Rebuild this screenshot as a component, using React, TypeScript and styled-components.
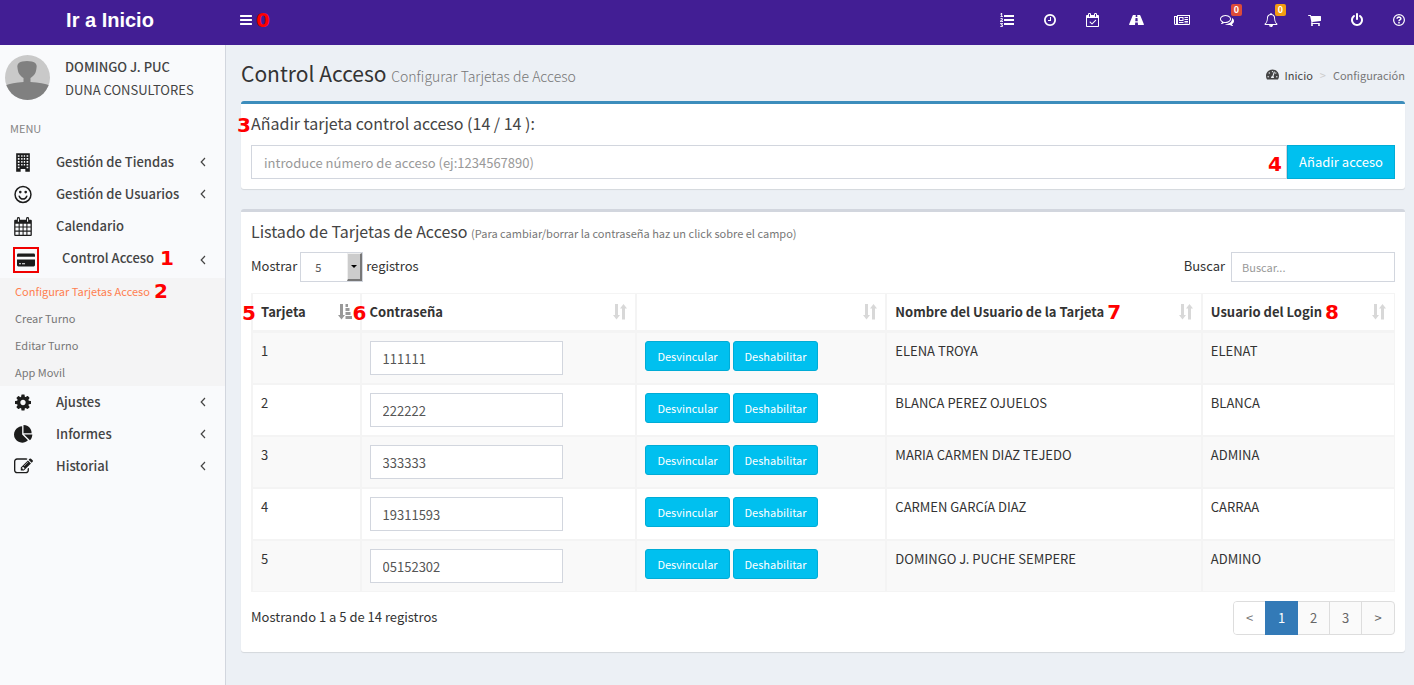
import React from 'react';
import styled, { createGlobalStyle, css } from 'styled-components';
import { FaTachometerAlt } from 'react-icons/fa';

const Global = createGlobalStyle`
  *, *::before, *::after { box-sizing: border-box; }
  body {
    margin: 0;
    background: #ecf0f5;
    color: #333;
    font-family: "Noto Sans CJK SC", "Noto Sans", sans-serif;
    font-size: 13px;
    line-height: 20px;
  }
  a { color: inherit; text-decoration: none; }
  button, input, select { font: inherit; color: inherit; margin: 0; }
  h1, h2, p, ul, ol { margin: 0; padding: 0; font-weight: 400; }
  ul, ol { list-style: none; }
`;

/* ---------- icons ---------- */

type Glyph = { x: number; w: number; body: React.ReactNode };
const solid = (x: number, w: number, d: string): Glyph => ({ x, w, body: <path d={d} fillRule="evenodd" /> });

const glyphs: Record<string, Glyph> = {
  bars: solid(128, 1536, 'M1664 1344v128q0 26-19 45t-45 19H192q-26 0-45-19t-19-45v-128q0-26 19-45t45-19h1408q26 0 45 19t19 45zm0-512v128q0 26-19 45t-45 19H192q-26 0-45-19t-19-45V832q0-26 19-45t45-19h1408q26 0 45 19t19 45zm0-512v128q0 26-19 45t-45 19H192q-26 0-45-19t-19-45V320q0-26 19-45t45-19h1408q26 0 45 19t19 45z'),
  list: solid(0, 1792, 'M381 1620q0 80-54.5 126t-135.5 46q-106 0-172-66l57-88q49 45 106 45 29 0 50.5-14.5t21.5-42.5q0-64-105-56l-26-56q8-10 32.5-43.5t42.5-54 37-38.5v-1q-16 0-48.5 1t-48.5 1v53h-106v-152h333v88l-95 115q51 12 81 49t30 88zm2-627v159h-362q-6-36-6-54 0-51 23.5-93t56.5-68 66-47.5 56.5-43.5 23.5-45q0-25-14.5-38.5t-39.5-13.5q-46 0-81 58l-85-59q24-51 71.5-79.5t105.5-28.5q73 0 123 41.5t50 112.5q0 50-34 91.5t-75 64.5-75.5 50.5-35.5 52.5h127v-60h105zm1409 319v192q0 13-9.5 22.5t-22.5 9.5h-1216q-13 0-22.5-9.5t-9.5-22.5v-192q0-14 9-23t23-9h1216q13 0 22.5 9.5t9.5 22.5zm-1408-899v99h-335v-99h107q0-41 .5-121.5t.5-121.5v-12h-2q-8 17-50 54l-71-76 136-127h106v404h108zm1408 387v192q0 13-9.5 22.5t-22.5 9.5h-1216q-13 0-22.5-9.5t-9.5-22.5v-192q0-14 9-23t23-9h1216q13 0 22.5 9.5t9.5 22.5zm0-512v192q0 13-9.5 22.5t-22.5 9.5h-1216q-13 0-22.5-9.5t-9.5-22.5v-192q0-13 9.5-22.5t22.5-9.5h1216q13 0 22.5 9.5t9.5 22.5z'),
  clock: solid(128, 1536, 'M1024 544v448q0 14-9 23t-23 9H672q-14 0-23-9t-9-23v-64q0-14 9-23t23-9h224V544q0-14 9-23t23-9h64q14 0 23 9t9 23zm416 352q0-148-73-273t-198-198-273-73-273 73-198 198-73 273 73 273 198 198 273 73 273-73 198-198 73-273zm224 0q0 209-103 385.5T1281.5 1561 896 1664t-385.5-103T231 1281.5 128 896t103-385.5T510.5 231 896 128t385.5 103T1561 510.5 1664 896z'),
  calendarCheck: solid(0, 1664, 'M1303 964l-512 512q-10 9-23 9t-23-9l-288-288q-9-10-9-23t9-22l46-46q9-9 22-9t23 9l220 220 444-444q10-9 23-9t22 9l46 46q9 9 9 22t-9 23zm-1175 700h1408v-1024h-1408v1024zm384-1216v-288q0-14-9-23t-23-9h-64q-14 0-23 9t-9 23v288q0 14 9 23t23 9h64q14 0 23-9t9-23zm768 0v-288q0-14-9-23t-23-9h-64q-14 0-23 9t-9 23v288q0 14 9 23t23 9h64q14 0 23-9t9-23zm384-64v1280q0 52-38 90t-90 38h-1408q-52 0-90-38t-38-90v-1280q0-52 38-90t90-38h128v-96q0-66 47-113t113-47h64q66 0 113 47t47 113v96h384v-96q0-66 47-113t113-47h64q66 0 113 47t47 113v96h128q52 0 90 38t38 90z'),
  road: solid(0, 1920, 'M540 256H870L850 512H1070L1050 256H1380Q1430 256 1450 306L1866 1336Q1904 1430 1904 1490 1904 1536 1870 1536H1150L1124 1216H796L770 1536H50Q16 1536 16 1490 16 1430 54 1336L470 306Q490 256 540 256ZM834 640L802 1056H1118L1086 640Z'),
  newspaper: {
    x: 0, w: 2048, body: (
      <path fillRule="evenodd" d="M384 256H2048V1408Q2048 1536 1920 1536H192Q0 1536 0 1344V384H384ZM512 384V1344Q512 1380 502 1408H1920V384ZM256 512H128V1344Q128 1408 192 1408T256 1344ZM640 512H1216V1024H640ZM768 640V896H1088V640ZM640 1152H1216V1280H640ZM1344 512H1792V640H1344ZM1344 768H1792V896H1344ZM1344 1024H1792V1152H1344ZM1344 1216H1792V1300H1344Z" />
    ),
  },
  comments: solid(0, 1792, 'M704 384q-153 0-286 52t-211.5 141-78.5 191q0 82 53 158t149 132l97 56-35 84q34-20 62-39l44-31 53 10q78 14 153 14 153 0 286-52t211.5-141 78.5-191-78.5-191-211.5-141-286-52zm0-128q191 0 353.5 68.5t256.5 186.5 94 257-94 257-256.5 186.5-353.5 68.5q-86 0-176-16-124 88-278 128-36 9-86 16h-3q-11 0-20.5-8t-11.5-21q-1-3-1-6.5t.5-6.5 2-6l2.5-5 3.5-5.5 4-5 4.5-5 4-4.5q5-6 23-25t26-29.5 22.5-29 25-38.5 20.5-44q-124-72-195-177t-71-224q0-139 94-257t256.5-186.5 353.5-68.5zm822 1169q10 24 20.5 44t25 38.5 22.5 29 26 29.5 23 25q1 1 4 4.5t4.5 5 4 5 3.5 5.5l2.5 5 2 6 .5 6.5-1 6.5q-3 14-13 22t-22 7q-50-7-86-16-154-40-278-128-90 16-176 16-271 0-472-132 58 4 88 4 161 0 309-45t264-129q125-92 192-212t67-254q0-77-23-152 129 71 204 178t75 230q0 120-71 224.5t-195 176.5z'),
  bell: solid(0, 1792, 'M912 1696q0-16-16-16-59 0-101.5-42.5t-42.5-101.5q0-16-16-16t-16 16q0 73 51.5 124.5t124.5 51.5q16 0 16-16zm-666-288h1300q-266-300-266-832 0-51-24-105t-69-103-121.5-80.5-169.5-31.5-169.5 31.5-121.5 80.5-69 103-24 105q0 532-266 832zm1482 0q0 52-38 90t-90 38h-448q0 106-75 181t-181 75-181-75-75-181h-448q-52 0-90-38t-38-90q50-42 91-88t85-119.5 74.5-158.5 50-206 19.5-260q0-152 117-282.5t307-158.5q-8-19-8-39 0-40 28-68t68-28 68 28 28 68q0 20-8 39 190 28 307 158.5t117 282.5q0 139 19.5 260t50 206 74.5 158.5 85 119.5 91 88z'),
  cart: solid(64, 1664, 'M704 1536q0 52-38 90t-90 38-90-38-38-90 38-90 90-38 90 38 38 90zm896 0q0 52-38 90t-90 38-90-38-38-90 38-90 90-38 90 38 38 90zm128-1088v512q0 24-16.5 42.5t-40.5 21.5l-1044 122q13 60 13 70 0 16-24 64h920q26 0 45 19t19 45-19 45-45 19h-1024q-26 0-45-19t-19-45q0-11 8-31.5t16-36 21.5-40 15.5-29.5l-177-823h-204q-26 0-45-19t-19-45 19-45 45-19h256q16 0 28.5 6.5t19.5 15.5 13 24.5 8 26 5.5 29.5 4.5 26h1201q26 0 45 19t19 45z'),
  power: solid(128, 1536, 'M1664 896q0 156-61 298t-164 245-245 164-298 61-298-61-245-164-164-245-61-298q0-182 80.5-343t226.5-270q43-32 95.5-25t83.5 50q32 42 24.5 94.5t-49.5 84.5q-98 74-151.5 181t-53.5 228q0 104 40.5 198.5t109.5 163.5 163.5 109.5 198.5 40.5 198.5-40.5 163.5-109.5 109.5-163.5 40.5-198.5q0-121-53.5-228t-151.5-181q-42-32-49.5-84.5t24.5-94.5q31-43 84-50t95 25q146 109 226.5 270t80.5 343zm-640-768v640q0 52-38 90t-90 38-90-38-38-90v-640q0-52 38-90t90-38 90 38 38 90z'),
  question: {
    x: 128, w: 1536, body: (
      <>
        <circle cx="896" cy="896" r="690" fill="none" stroke="currentColor" strokeWidth="156" />
        <path d="M650 730Q660 500 900 500 1140 510 1140 715 1140 820 1010 890 896 950 896 1070" fill="none" stroke="currentColor" strokeWidth="190" />
        <path d="M800 1160h192v192H800z" />
      </>
    ),
  },
  building: solid(128, 1536, 'M240 0H1552V1792H1120V1520H672V1792H240ZM400 190V350H560V190ZM720 190V350H850V190ZM970 190V350H1100V190ZM1240 190V350H1400V190ZM400 470V630H560V470ZM720 470V630H850V470ZM970 470V630H1100V470ZM1240 470V630H1400V470ZM400 750V910H560V750ZM720 750V910H850V750ZM970 750V910H1100V750ZM1240 750V910H1400V750ZM400 1030V1190H560V1030ZM720 1030V1190H850V1030ZM970 1030V1190H1100V1030ZM1240 1030V1190H1400V1030ZM400 1310V1440H560V1310ZM1240 1310V1440H1400V1310Z'),
  smile: {
    x: 64, w: 1664, body: (
      <>
        <circle cx="896" cy="896" r="750" fill="none" stroke="currentColor" strokeWidth="140" />
        <circle cx="640" cy="670" r="125" />
        <circle cx="1152" cy="670" r="125" />
        <path d="M540 1060Q640 1330 896 1330T1252 1060" fill="none" stroke="currentColor" strokeWidth="140" strokeLinecap="round" />
      </>
    ),
  },
  calendar: solid(0, 1664, 'M90 256H256V130Q256 0 400 0T544 130V256H1120V130Q1120 0 1264 0T1408 130V256H1574Q1664 256 1664 350V1700Q1664 1792 1574 1792H90Q0 1792 0 1700V350Q0 256 90 256ZM350 130V450H450V130ZM1214 130V450H1314V130ZM120 640V900H420V640ZM520 640V900H790V640ZM890 640V900H1150V640ZM1250 640V900H1544V640ZM120 1000V1280H420V1000ZM520 1000V1280H790V1000ZM890 1000V1280H1150V1000ZM1250 1000V1280H1544V1000ZM120 1380V1670H420V1380ZM520 1380V1670H790V1380ZM890 1380V1670H1150V1380ZM1250 1380V1670H1544V1380Z'),
  card: solid(0, 1792, 'M130 256H1662Q1792 256 1792 386V570H0V386Q0 256 130 256ZM0 850H1792V1406Q1792 1536 1662 1536H130Q0 1536 0 1406ZM200 1210V1330H400V1210ZM500 1210V1330H800V1210Z'),
  cog: solid(128, 1536, 'M1152 896q0-106-75-181t-181-75-181 75-75 181 75 181 181 75 181-75 75-181zm512-109v222q0 12-8 23t-20 13l-185 28q-19 54-39 91 35 50 107 138 10 12 10 25t-9 23q-27 37-99 108t-94 71q-12 0-26-9l-138-108q-44 23-91 38-16 136-29 186-7 28-36 28h-222q-14 0-24.5-8.5t-11.5-21.5l-28-184q-49-16-90-37l-141 107q-10 9-25 9-14 0-25-11-126-114-165-168-7-10-7-23 0-12 8-23 15-21 51-66.5t54-70.5q-27-50-41-99l-183-27q-13-2-21-12.5t-8-23.5v-222q0-12 8-23t19-13l186-28q14-46 39-92-40-57-107-138-10-12-10-24 0-10 9-23 26-36 98.5-107.5t94.5-71.5q13 0 26 10l138 107q44-23 91-38 16-136 29-186 7-28 36-28h222q14 0 24.5 8.5t11.5 21.5l28 184q49 16 90 37l142-107q9-9 24-9 13 0 25 10 129 119 165 170 7 8 7 22 0 12-8 23-15 21-51 66.5t-54 70.5q26 50 41 98l183 28q13 2 21 12.5t8 23.5z'),
  pie: solid(0, 1792, 'M768 890l546 546q-106 108-247.5 168t-298.5 60q-209 0-385.5-103t-279.5-279.5-103-385.5 103-385.5 279.5-279.5 385.5-103v762zm187 6h773q0 157-60 298.5t-168 247.5zm709-128h-768v-768q209 0 385.5 103t279.5 279.5 103 385.5z'),
  edit: solid(0, 1792, 'M888 1184l116-116-152-152-116 116v56h96v96h56zm440-720q-16-16-33 1l-350 350q-17 17-1 33t33-1l350-350q17-17 1-33zm80 594v190q0 119-84.5 203.5t-203.5 84.5h-832q-119 0-203.5-84.5t-84.5-203.5v-832q0-119 84.5-203.5t203.5-84.5h832q63 0 117 25 15 7 18 23 3 17-9 29l-49 49q-14 14-32 8-23-6-45-6h-832q-66 0-113 47t-47 113v832q0 66 47 113t113 47h832q66 0 113-47t47-113v-126q0-13 9-22l64-64q15-15 35-7t20 29zm-96-738l288 288-672 672h-288v-288zm444 132l-92 92-288-288 92-92q28-28 68-28t68 28l152 152q28 28 28 68t-28 68z'),
};

const Svg = styled.svg`
  display: block;
  flex: none;
  fill: currentColor;
`;

const Icon = ({ name, size = 14 }: { name: string; size?: number }) => {
  const g = glyphs[name];
  return (
    <Svg aria-hidden viewBox={`${g.x} 0 ${g.w} 1792`} width={Math.round((g.w / 1792) * size)} height={size}>
      {g.body}
    </Svg>
  );
};

const Angle = () => (
  <Svg aria-hidden viewBox="0 0 6 10" width="6" height="10">
    <path d="M5 1L1.200 5 5 9" fill="none" stroke="currentColor" strokeWidth="1.200" />
  </Svg>
);

const SortBoth = () => (
  <Svg aria-hidden viewBox="0 0 14 16" width="14" height="16">
    <path d="M2 0h3v11h2L3.500 15.500 0 11h2zM9 15.500h3V4.500h2L10.500 0 7 4.500h2z" />
  </Svg>
);

const SortAsc = () => (
  <Svg aria-hidden viewBox="0 0 14 16" width="14" height="16">
    <path d="M2 0h3v11h2L3.500 15.500 0 11h2zM7.500 0h2.500v3H7.500zM7.500 4h4v3h-4zM7.500 8h5v3h-5zM7.500 12H14v3H7.500z" />
  </Svg>
);

/* ---------- numbered callouts ---------- */

const Marker = styled.span<{ $over?: string }>`
  color: #f00;
  font: 700 20px/20px "DejaVu Sans", sans-serif;
  ${(p) => p.$over && css`position: absolute; z-index: 1; ${p.$over}`}
`;

/* ---------- header ---------- */

const Header = styled.header`
  display: flex;
  align-items: center;
  height: 45px;
  padding-right: 9px;
  background: #421e94;
  color: #fff;
`;

const Brand = styled.a`
  flex: none;
  width: 220px;
  padding-bottom: 6px;
  text-align: center;
  font: 700 20px/24px "Liberation Sans", Arial, sans-serif;
`;

const IconButton = styled.button`
  display: flex;
  position: relative;
  padding: 0;
  border: 0;
  background: none;
  color: inherit;
  cursor: pointer;
`;

const HeaderLeft = styled.div`
  display: flex;
  align-items: center;
  gap: 4px;
  flex: 1;
  padding: 0 0 5px 20px;
`;

const HeaderNav = styled.nav`
  display: flex;
  align-items: center;
  gap: 30px;
  padding-bottom: 5px;
`;

const Count = styled.span<{ $color: string }>`
  position: absolute;
  top: -9px;
  right: -8px;
  width: 11px;
  border-radius: 2px;
  background: ${(p) => p.$color};
  text-align: center;
  font-size: 9px;
  line-height: 12px;
  font-weight: 700;
`;

/* ---------- sidebar ---------- */

const Body = styled.div`
  display: flex;
  align-items: stretch;
  min-height: calc(100vh - 45px);
`;

const Sidebar = styled.aside`
  flex: none;
  width: 226px;
  border-right: 1px solid #d2d6de;
  background: #f9fafc;
  color: #444;
`;

const User = styled.div`
  display: flex;
  gap: 15px;
  padding: 10px 5px;
`;

const UserText = styled.div`
  display: flex;
  flex-direction: column;
  gap: 3px;
  padding-top: 2px;
`;

const UserName = styled.strong`
  font-weight: 500;
`;

const MenuTitle = styled.p`
  padding: 8px 10px;
  color: #848484;
  font-size: 11px;
`;

const MenuLink = styled.a<{ $tall?: boolean }>`
  display: flex;
  align-items: center;
  height: ${(p) => (p.$tall ? 36 : 32)}px;
  padding: 0 19px 0 13px;
  font-weight: 500;
`;

const MenuIcon = styled.span<{ $framed?: boolean }>`
  display: flex;
  align-items: center;
  justify-content: center;
  flex: none;
  width: ${(p) => (p.$framed ? 26 : 20)}px;
  height: ${(p) => (p.$framed ? 26 : 20)}px;
  margin-right: 23px;
  border: ${(p) => (p.$framed ? '2px solid #f00000' : '0')};
  color: #1c1c1c;
`;

const MenuLabel = styled.span<{ $raised?: boolean }>`
  display: flex;
  align-items: center;
  gap: 6px;
  flex: 1;
  padding-bottom: ${(p) => (p.$raised ? 4 : 0)}px;
`;

const SubMenu = styled.ul`
  background: #f4f4f5;
  color: #777;
  font-size: 11px;
`;

const SubLink = styled.a<{ $active?: boolean }>`
  display: flex;
  align-items: center;
  gap: 4px;
  height: 27px;
  padding: 0 0 2px 15px;
  color: ${(p) => (p.$active ? '#ff7f50' : 'inherit')};
`;

/* ---------- content ---------- */

const Main = styled.main`
  flex: 1;
  min-width: 0;
  padding: 15px 9px 13px 15px;
`;

const PageHead = styled.div`
  display: flex;
  align-items: center;
  justify-content: space-between;
  height: 28px;
  margin-bottom: 13px;
`;

const PageTitle = styled.h1`
  font-size: 21px;
  line-height: 28px;
`;

const PageHint = styled.small`
  color: #777;
  font-size: 14px;
  font-weight: 300;
`;

const Crumbs = styled.ol`
  display: flex;
  align-items: center;
  gap: 7px;
  padding-top: 1px;
  color: #777;
  font-size: 11px;
`;

const CrumbLink = styled.a`
  display: flex;
  align-items: center;
  gap: 6px;
  color: #444;
`;

const CrumbSep = styled.li`
  color: #ccc;
`;

const Box = styled.section<{ $accent: string }>`
  position: relative;
  margin-bottom: 20px;
  padding: 10px;
  border-top: 3px solid ${(p) => p.$accent};
  border-radius: 3px;
  background: #fff;
  box-shadow: 0 1px 1px rgba(0, 0, 0, 0.1);
`;

const BoxTitle = styled.h2`
  margin-bottom: 12px;
  color: #444;
  font-size: 16px;
  line-height: 18px;
`;

const BoxHint = styled.small`
  color: #777;
  font-size: 11px;
  line-height: 11px;
`;

const field = css`
  border: 1px solid #d2d6de;
  border-radius: 0;
  background: #fff;
  color: #555;
  outline: 0;
  &::placeholder { color: #999; opacity: 1; }
`;

const AddForm = styled.form`
  display: flex;
  position: relative;
  padding-top: 1px;
`;

const TextField = styled.input<{ $wide?: boolean }>`
  ${field}
  display: block;
  flex: ${(p) => (p.$wide ? 1 : 'none')};
  min-width: 0;
  width: 193px;
  height: 34px;
  padding: 6px 12px;
`;

const AddButton = styled.button`
  width: 108px;
  height: 34px;
  border: 1px solid #00acd6;
  background: #00c0ef;
  color: #fff;
  cursor: pointer;
`;

const Controls = styled.div`
  display: flex;
  justify-content: space-between;
  margin-bottom: 11px;
`;

const ControlLabel = styled.label`
  display: flex;
  align-items: center;
  gap: 3px;
`;

const ControlText = styled.span`
  padding-bottom: 2px;
`;

const SelectWrap = styled.span`
  display: block;
  position: relative;
`;

const Select = styled.select`
  ${field}
  display: block;
  width: 63px;
  height: 30px;
  padding: 0 14px;
  appearance: none;
  font-size: 11px;
`;

const SelectArrow = styled.span`
  position: absolute;
  top: 1px;
  right: 1px;
  display: flex;
  align-items: center;
  justify-content: center;
  width: 15px;
  height: 28px;
  border: solid;
  border-width: 1px 2px 2px 1px;
  border-color: #eee #777 #777 #eee;
  background: #ccc;
  pointer-events: none;
  &::after {
    content: "";
    border: 3px solid transparent;
    border-top-color: #000;
    border-bottom: 0;
  }
`;

const SearchField = styled.input`
  ${field}
  width: 164px;
  height: 30px;
  margin-left: 3px;
  padding: 5px 10px;
  font-size: 11px;
`;

const Table = styled.table`
  width: 100%;
  table-layout: fixed;
  border-collapse: separate;
  border-spacing: 0;
  border-left: 1px solid #f4f4f4;
`;

const Col = styled.col<{ $w?: string }>`
  width: ${(p) => p.$w || 'auto'};
`;

const Th = styled.th`
  position: relative;
  height: 39px;
  padding: 0 8px;
  border: 1px solid #f4f4f4;
  border-bottom-width: 2px;
  text-align: left;
  white-space: nowrap;
`;

const ThInner = styled.div<{ $active?: boolean }>`
  display: flex;
  align-items: center;
  justify-content: space-between;
  & > svg { color: ${(p) => (p.$active ? '#999' : '#d8d8d8')}; }
`;

const ThLabel = styled.span`
  display: flex;
  align-items: center;
  gap: 3px;
`;

const Row = styled.tr`
  &:nth-child(odd) { background: #f9f9f9; }
`;

const Td = styled.td`
  height: 52px;
  padding: 8px;
  border: 1px solid #f4f4f4;
  vertical-align: top;
`;

const Actions = styled.div`
  display: flex;
  gap: 3px;
`;

const ActionButton = styled.button`
  width: 85px;
  height: 30px;
  padding: 0;
  border: 1px solid #00acd6;
  border-radius: 3px;
  background: #00c0ef;
  color: #fff;
  font-size: 11px;
  cursor: pointer;
`;

const Foot = styled.div`
  display: flex;
  justify-content: space-between;
  padding: 9px 0 7px;
`;

const FootText = styled.p`
  padding-top: 6px;
`;

const Pages = styled.nav`
  display: flex;
  border: 1px solid #ddd;
  border-radius: 4px;
  background: #fafafa;
`;

const PageButton = styled.button<{ $state?: 'active' | 'off' }>`
  width: 32px;
  height: 32px;
  padding: 0;
  border: 0;
  border-right: 1px solid #ddd;
  background: none;
  color: #666;
  cursor: pointer;
  &:last-child { border-right: 0; }
  ${(p) => p.$state === 'off' && css`
    width: 31px;
    border-right: 0;
    border-radius: 3px 0 0 3px;
    background: #fff;
    color: #777;
  `}
  ${(p) => p.$state === 'active' && css`
    width: 33px;
    height: 34px;
    margin: -1px 0;
    border-right: 0;
    background: #337ab7;
    color: #fff;
  `}
`;

const Avatar = () => (
  <Svg role="img" aria-label="DOMINGO J. PUC" viewBox="0 0 45 45" width="45" height="45">
    <clipPath id="avatar"><circle cx="22.500" cy="22.500" r="22.500" /></clipPath>
    <g clipPath="url(#avatar)">
      <path fill="#c9c9c9" d="M0 0h45v45H0z" />
      <path fill="#808080" d="M12.500 13Q11 6 22 6T31.500 13Q31 18 29 20 26.500 22.500 25.500 23V27Q38 27.500 45 30.500V45H0V30.500Q7 27.500 18.500 27V23Q17 22.500 15 20 13 18 12.500 13Z" />
    </g>
  </Svg>
);

const MenuItem = ({ icon, label, closed }: { icon: string; label: string; closed?: boolean }) => (
  <li>
    <MenuLink href="#">
      <MenuIcon><Icon name={icon} size={19} /></MenuIcon>
      <MenuLabel>{label}</MenuLabel>
      {closed && <Angle />}
    </MenuLink>
  </li>
);

const rows = [
  ['1', '111111', 'ELENA TROYA', 'ELENAT'],
  ['2', '222222', 'BLANCA PEREZ OJUELOS', 'BLANCA'],
  ['3', '333333', 'MARIA CARMEN DIAZ TEJEDO', 'ADMINA'],
  ['4', '19311593', 'CARMEN GARCíA DIAZ', 'CARRAA'],
  ['5', '05152302', 'DOMINGO J. PUCHE SEMPERE', 'ADMINO'],
];

const nav: { icon: string; label: string; badge?: string }[] = [
  { icon: 'list', label: 'Lista' },
  { icon: 'clock', label: 'Horario' },
  { icon: 'calendarCheck', label: 'Calendario' },
  { icon: 'road', label: 'Rutas' },
  { icon: 'newspaper', label: 'Noticias' },
  { icon: 'comments', label: 'Mensajes', badge: '#dd4b39' },
  { icon: 'bell', label: 'Avisos', badge: '#f39c12' },
  { icon: 'cart', label: 'Compras' },
  { icon: 'power', label: 'Salir' },
  { icon: 'question', label: 'Ayuda' },
];

export default function App() {
  return (
    <>
      <Global />
      <Header>
        <Brand href="#">Ir a Inicio</Brand>
        <HeaderLeft>
          <IconButton aria-label="Menu"><Icon name="bars" /></IconButton>
          <Marker>0</Marker>
        </HeaderLeft>
        <HeaderNav>
          {nav.map((n) => (
            <IconButton key={n.icon} aria-label={n.label}>
              <Icon name={n.icon} />
              {n.badge && <Count $color={n.badge}>0</Count>}
            </IconButton>
          ))}
        </HeaderNav>
      </Header>
      <Body>
        <Sidebar>
          <User>
            <Avatar />
            <UserText>
              <UserName>DOMINGO J. PUC</UserName>
              <span>DUNA CONSULTORES</span>
            </UserText>
          </User>
          <MenuTitle>MENU</MenuTitle>
          <ul>
            <MenuItem icon="building" label="Gestión de Tiendas" closed />
            <MenuItem icon="smile" label="Gestión de Usuarios" closed />
            <MenuItem icon="calendar" label="Calendario" />
            <li>
              <MenuLink href="#" $tall>
                <MenuIcon $framed><Icon name="card" size={18} /></MenuIcon>
                <MenuLabel $raised>Control Acceso <Marker>1</Marker></MenuLabel>
                <Angle />
              </MenuLink>
              <SubMenu>
                <li><SubLink href="#" $active>Configurar Tarjetas Acceso <Marker>2</Marker></SubLink></li>
                <li><SubLink href="#">Crear Turno</SubLink></li>
                <li><SubLink href="#">Editar Turno</SubLink></li>
                <li><SubLink href="#">App Movil</SubLink></li>
              </SubMenu>
            </li>
            <MenuItem icon="cog" label="Ajustes" closed />
            <MenuItem icon="pie" label="Informes" closed />
            <MenuItem icon="edit" label="Historial" closed />
          </ul>
        </Sidebar>
        <Main>
          <PageHead>
            <PageTitle>Control Acceso <PageHint>Configurar Tarjetas de Acceso</PageHint></PageTitle>
            <Crumbs>
              <li><CrumbLink href="#"><FaTachometerAlt size={13} />Inicio</CrumbLink></li>
              <CrumbSep>&gt;</CrumbSep>
              <li>Configuración</li>
            </Crumbs>
          </PageHead>

          <Box $accent="#3c8dbc">
            <Marker $over="left: -4px; top: 11px;">3</Marker>
            <BoxTitle><label htmlFor="card-number">Añadir tarjeta control acceso (14 / 14 ):</label></BoxTitle>
            <AddForm onSubmit={(e) => e.preventDefault()}>
              <TextField id="card-number" $wide placeholder="introduce número de acceso (ej:1234567890)" />
              <Marker $over="right: 113px; top: 10px;">4</Marker>
              <AddButton>Añadir acceso</AddButton>
            </AddForm>
          </Box>

          <Box $accent="#d2d6de">
            <BoxTitle>
              Listado de Tarjetas de Acceso <BoxHint>(Para cambiar/borrar la contraseña haz un click sobre el campo)</BoxHint>
            </BoxTitle>
            <Controls>
              <ControlLabel>
                <ControlText>Mostrar</ControlText>
                <SelectWrap>
                  <Select defaultValue="5"><option>5</option><option>10</option></Select>
                  <SelectArrow />
                </SelectWrap>
                <ControlText>registros</ControlText>
              </ControlLabel>
              <ControlLabel><ControlText>Buscar</ControlText> <SearchField placeholder="Buscar..." /></ControlLabel>
            </Controls>
            <Table>
              <colgroup>
                <Col $w="9.5%" /><Col $w="24.1%" /><Col $w="21.9%" /><Col $w="27.6%" /><Col />
              </colgroup>
              <thead>
                <tr>
                  <Th>
                    <Marker $over="left: -11px; top: 9px;">5</Marker>
                    <ThInner $active>Tarjeta<SortAsc /></ThInner>
                  </Th>
                  <Th>
                    <Marker $over="left: -9px; top: 9px;">6</Marker>
                    <ThInner>Contraseña<SortBoth /></ThInner>
                  </Th>
                  <Th><ThInner><span /><SortBoth /></ThInner></Th>
                  <Th><ThInner><ThLabel>Nombre del Usuario de la Tarjeta <Marker>7</Marker></ThLabel><SortBoth /></ThInner></Th>
                  <Th><ThInner><ThLabel>Usuario del Login <Marker>8</Marker></ThLabel><SortBoth /></ThInner></Th>
                </tr>
              </thead>
              <tbody>
                {rows.map(([id, pass, name, login]) => (
                  <Row key={id}>
                    <Td>{id}</Td>
                    <Td><TextField aria-label={`Contraseña ${id}`} defaultValue={pass} /></Td>
                    <Td>
                      <Actions>
                        <ActionButton>Desvincular</ActionButton>
                        <ActionButton>Deshabilitar</ActionButton>
                      </Actions>
                    </Td>
                    <Td>{name}</Td>
                    <Td>{login}</Td>
                  </Row>
                ))}
              </tbody>
            </Table>
            <Foot>
              <FootText>Mostrando 1 a 5 de 14 registros</FootText>
              <Pages aria-label="Paginación">
                <PageButton $state="off">&lt;</PageButton>
                <PageButton $state="active">1</PageButton>
                <PageButton>2</PageButton>
                <PageButton>3</PageButton>
                <PageButton>&gt;</PageButton>
              </Pages>
            </Foot>
          </Box>
        </Main>
      </Body>
    </>
  );
}
